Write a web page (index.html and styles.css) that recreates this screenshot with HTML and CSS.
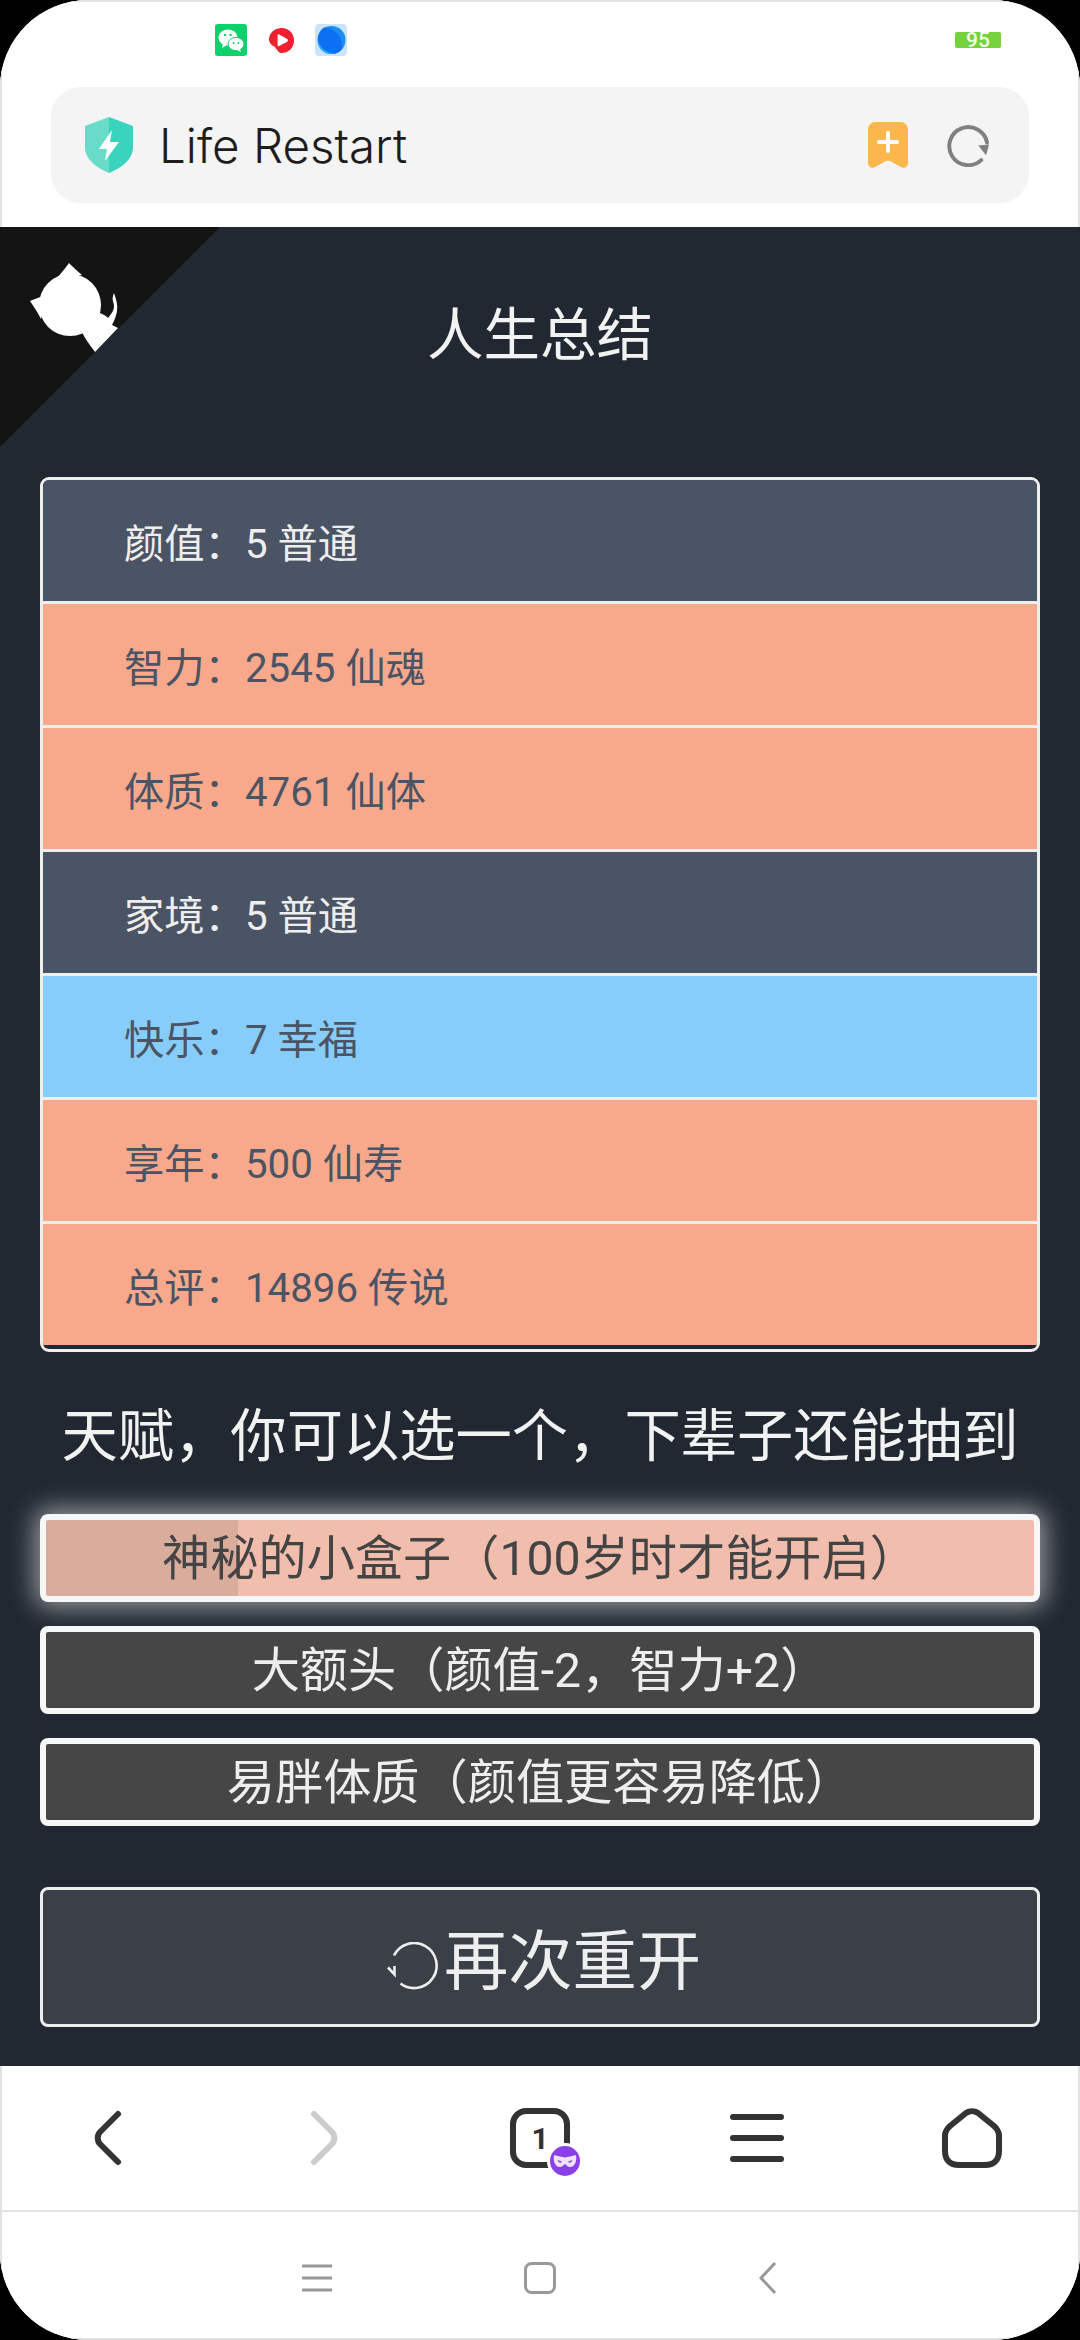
FILE: index.html
```html
<!DOCTYPE html>
<html lang="zh">
<head>
<meta charset="utf-8">
<title>Life Restart</title>
<link rel="stylesheet" href="styles.css">
</head>
<body>
<div class="screen">
  <header class="browser-top">
    <div class="status">
      <svg class="st-icon" viewBox="0 0 32 32"><rect width="32" height="32" rx="3" fill="#0fd16b"/><ellipse cx="13" cy="13.5" rx="9.5" ry="8" fill="#fff"/><path d="M8 19l-1 5 5-3z" fill="#fff"/><ellipse cx="21" cy="20" rx="8" ry="6.6" fill="#fff" stroke="#0fd16b" stroke-width="1"/><path d="M25 25l1 3-4-2z" fill="#fff"/><circle cx="10" cy="11" r="1.2" fill="#0fd16b"/><circle cx="15.500" cy="11" r="1.2" fill="#0fd16b"/><circle cx="18.500" cy="19" r="1" fill="#0fd16b"/><circle cx="23.500" cy="19" r="1" fill="#0fd16b"/></svg>
      <svg class="st-icon st-red" viewBox="0 0 28 28"><path d="M14 1C22 1 27 7 27 14C27 22 21 27 14 27C10 27 9 22 6 20C2 18 1 15 1 12C2 5 8 1 14 1Z" fill="#f0202f"/><path d="M10 8.500C10 8 10.500 7.500 11 7.500L20 12.500C20.800 13.200 20.800 14.500 20 15.200L11 20C10.500 20 10 19.500 10 19Z" fill="#fff"/></svg>
      <svg class="st-icon" viewBox="0 0 32 32"><rect width="32" height="32" rx="4" fill="#c9e4fb"/><circle cx="16.500" cy="16" r="14" fill="#1d8df0"/><path d="M9 3.500C17 3.500 28 10 27 25C24 29 20 30 16.500 30C9 30 3 24 3 16C3 11 5 6 9 3.500Z" fill="#0d6ff3"/><path d="M3 16C5 24 11 29 19 29.500L16.500 30C9 30 3 24 3 16Z" fill="#25b5ee"/></svg>
      <span class="battery">95</span>
    </div>
    <div class="address">
      <svg class="shield" viewBox="0 0 48 56"><path d="M24 0L48 9V30C48 43 36 51 24 56Z" fill="#3ad3bd"/><path d="M24 0L0 9V30C0 43 12 51 24 56Z" fill="#68dbc9"/><path d="M27 13L14 32H22L20 44L34 25H25Z" fill="#fff"/></svg>
      <span class="site">Life Restart</span>
      <svg class="bookmark" viewBox="0 0 40 46"><path d="M8 0H32C37 0 40 3 40 8V41C40 45 36 47 33 45L22 39C21 38.500 19 38.500 18 39L7 45C4 47 0 45 0 41V8C0 3 3 0 8 0Z" fill="#fbb64c"/><path d="M20 11V29M11 20H29" stroke="#fff" stroke-width="4" stroke-linecap="round"/></svg>
      <svg class="reload" viewBox="0 0 44 44"><path d="M35 37A19.500 19.500 0 1 1 41 19" fill="none" stroke="#808080" stroke-width="4" stroke-linecap="round"/><path d="M32 22L43 21L40 32Z" fill="#808080"/></svg>
    </div>
  </header>

  <main class="game">
    <svg class="corner" viewBox="0 0 220 220">
      <path d="M0 0H220L0 220Z" fill="#141414"/>
      <g fill="#fff">
        <circle cx="70" cy="78" r="31"/>
        <path d="M69 36C72 39 76 43 82 48L56 53C59 48 65 42 69 36Z"/>
        <path d="M30 74C35 72 40 70 46 68L41 92C38 86 34 80 30 74Z"/>
        <path d="M81 102L96 84L104 88C106 89 107 90 108 91C112 86 114 83 114 79C114 75 111 73 114 66C116 72 118 78 117 84C116 90 114 94 112 98L118 101L95 125C90 118 84 111 81 102Z"/>
      </g>
    </svg>
    <h1 class="title">人生总结</h1>
    <ul class="summary">
      <li class="row row-grey">颜值：5 普通</li>
      <li class="row row-orange">智力：2545 仙魂</li>
      <li class="row row-orange">体质：4761 仙体</li>
      <li class="row row-grey">家境：5 普通</li>
      <li class="row row-blue">快乐：7 幸福</li>
      <li class="row row-orange">享年：500 仙寿</li>
      <li class="row row-orange row-last">总评：14896 传说</li>
    </ul>
    <h2 class="subtitle">天赋，你可以选一个，下辈子还能抽到</h2>
    <div class="talents">
      <button class="talent talent-active">神秘的小盒子（100岁时才能开启）</button>
      <button class="talent">大额头（颜值-2，智力+2）</button>
      <button class="talent">易胖体质（颜值更容易降低）</button>
    </div>
    <button class="restart">
      <svg class="restart-icon" viewBox="0 0 54 50"><path d="M7 13.500A22.500 22.500 0 1 1 13.500 41.500" fill="none" stroke="#eee" stroke-width="2.600"/><path d="M1 25.500L7.500 32.500L7.500 24" fill="none" stroke="#eee" stroke-width="2.600"/></svg>
      <span>再次重开</span>
    </button>
  </main>

  <nav class="toolbar">
    <div class="tool"><svg class="tool-icon" viewBox="0 0 60 60"><path d="M40 6L22 24C19 27 19 33 22 36L40 54" fill="none" stroke="#333" stroke-width="6" stroke-linecap="round"/></svg></div>
    <div class="tool"><svg class="tool-icon" viewBox="0 0 60 60"><path d="M20 6L38 24C41 27 41 33 38 36L20 54" fill="none" stroke="#ccc" stroke-width="6" stroke-linecap="round"/></svg></div>
    <div class="tool">
      <div class="tabs">
        <svg class="tool-icon" viewBox="0 0 60 60"><rect x="3" y="3" width="54" height="54" rx="13" fill="none" stroke="#333" stroke-width="6"/></svg>
        <span class="tab-count">1</span>
        <svg class="mask" viewBox="0 0 36 36"><circle cx="18" cy="18" r="18" fill="#fff"/><circle cx="18" cy="18" r="15" fill="#8b3fe8"/><path d="M7 12C11 13 15 14 18 14.500C21 14 25 13 29 12C30 18 28 24 23 24C20 24 19 21 18 21C17 21 16 24 13 24C8 24 6 18 7 12Z" fill="#efe3fc"/><path d="M10.500 17L15 18.500C14 20.500 11.500 20 10.500 17ZM25.500 17L21 18.500C22 20.500 24.500 20 25.500 17Z" fill="#8b3fe8"/></svg>
      </div>
    </div>
    <div class="tool"><svg class="tool-icon" viewBox="0 0 60 60"><path d="M7 9H55M7 30H55M7 51H55" stroke="#333" stroke-width="6" stroke-linecap="round"/></svg></div>
    <div class="tool"><svg class="tool-icon" viewBox="0 0 60 60"><path d="M24 5C27.500 2.500 32.500 2.500 36 5L52 18C55.500 21 57 24 57 28V43C57 52 52 57 43 57H17C8 57 3 52 3 43V28C3 24 4.500 21 8 18Z" fill="none" stroke="#333" stroke-width="6" stroke-linejoin="round"/></svg></div>
  </nav>

  <nav class="sysnav">
    <svg class="sys sys-menu" viewBox="0 0 30 30"><path d="M1 3H29M1 15H29M1 27H29" stroke="#999" stroke-width="3" stroke-linecap="round"/></svg>
    <svg class="sys sys-home" viewBox="0 0 32 32"><rect x="1.500" y="1.500" width="29" height="29" rx="6" fill="none" stroke="#999" stroke-width="3"/></svg>
    <svg class="sys sys-back" viewBox="0 0 18 32"><path d="M16 1L2 16L16 31" fill="none" stroke="#999" stroke-width="3"/></svg>
  </nav>
</div>
</body>
</html>
```
FILE: styles.css
```css
* { box-sizing: border-box; }
html, body { margin: 0; padding: 0; background: #000; }
body { width: 1080px; height: 2340px; font-family: Roboto, "Noto Sans CJK SC", sans-serif; }

.screen {
  position: relative;
  width: 1080px;
  height: 2340px;
  display: flex;
  flex-direction: column;
  overflow: hidden;
  border-radius: 88px;
  background: #fff;
}

.browser-top { height: 227px; flex: none; background: #fff; box-shadow: inset 2px 2px 0 #e2e2e2, inset -2px 0 0 #e2e2e2; }
.status { height: 87px; display: flex; align-items: center; padding: 0 79px 7px 215px; }
.st-icon { width: 32px; height: 32px; flex: none; margin-right: 21px; }
.st-red { width: 27px; height: 27px; margin-right: 20px; }
.battery {
  margin-left: auto;
  width: 46px;
  height: 16px;
  background: #74d23c;
  border-radius: 2px;
  color: #f4fbe9;
  font-size: 21px;
  font-weight: 500;
  line-height: 16px;
  text-align: center;
}

.address {
  height: 116px;
  margin: 0 51px;
  padding: 0 39px 0 34px;
  display: flex;
  align-items: center;
  background: #f4f4f4;
  border-radius: 30px;
}
.shield { width: 48px; height: 56px; flex: none; margin-right: 26px; }
.site { font-family: Inter, sans-serif; font-size: 47.500px; font-weight: 350; color: #1d1d1d; flex: 1; }
.bookmark { width: 40px; height: 46px; flex: none; margin-right: 39px; }
.reload { width: 43px; height: 43px; flex: none; }

.game {
  position: relative;
  height: 1839px;
  flex: none;
  padding: 0 40px;
  background: #212832;
  color: #eee;
}
.corner { position: absolute; left: 0; top: 0; width: 220px; height: 220px; }
.title { margin: 0; padding: 79px 0 111px; font-size: 56.500px; font-weight: 400; line-height: 60px; text-align: center; color: #f2f2f2; }

.summary { margin: 0; padding: 0 0 1px; list-style: none; border: 3px solid #eee; border-radius: 9px; overflow: hidden; }
.row { height: 124px; padding: 8px 0 0 81px; border-bottom: 3px solid #eee; font-size: 40.300px; line-height: 113px; }
.row-last { border-bottom-color: #212832; }
.row-grey { background: #4b5464; color: #eee; }
.row-orange { background: #f9a98b; color: #4b5464; }
.row-blue { background: #87cdfa; color: #4b5464; }

.subtitle { margin: 55px 0 47px; font-size: 56.300px; font-weight: 400; line-height: 60px; text-align: center; color: #f2f2f2; white-space: nowrap; }

.talents { display: flex; flex-direction: column; gap: 24px; }
.talent {
  height: 88px;
  padding: 2px 0 0;
  border: 6px solid #f7f7f7;
  border-radius: 8px;
  background: #464646;
  color: #eee;
  font: 400 48.200px/1 Roboto, "Noto Sans CJK SC", sans-serif;
  text-align: center;
}
.talent-active {
  background: linear-gradient(to right, #d9ac9c 19.4%, #f1bdac 19.4%);
  color: #444;
  box-shadow: 0 0 26px 5px rgba(255, 255, 255, 0.55);
}

.restart {
  width: 100%;
  height: 140px;
  margin-top: 61px;
  padding: 10px 0 0 8px;
  display: flex;
  align-items: center;
  justify-content: center;
  gap: 3px;
  border: 3px solid #eee;
  border-radius: 8px;
  background: #3b3f48;
  color: #eee;
  font: 400 64.300px/1 Roboto, "Noto Sans CJK SC", sans-serif;
}
.restart-icon { width: 54px; height: 50px; flex: none; margin-top: 10px; }

.toolbar { height: 146px; flex: none; display: flex; align-items: center; background: #fff; border-bottom: 2px solid #e3e3e3; box-shadow: inset 2px 0 0 #e2e2e2, inset -2px 0 0 #e2e2e2; }
.tool { flex: 1; display: flex; justify-content: center; }
.tool-icon { width: 60px; height: 60px; display: block; }
.tabs { position: relative; width: 60px; height: 60px; }
.tab-count { position: absolute; inset: 0; display: flex; align-items: center; justify-content: center; font-size: 30px; font-weight: 700; color: #333; }
.mask { position: absolute; left: 37px; top: 35px; width: 36px; height: 36px; }

.sysnav { height: 128px; flex: none; display: flex; align-items: center; padding: 4px 0 0 302px; background: #fff; box-shadow: inset 2px -2px 0 #e2e2e2, inset -2px 0 0 #e2e2e2; }
.sys { flex: none; display: block; }
.sys-menu { width: 30px; height: 30px; margin-right: 192px; }
.sys-home { width: 32px; height: 32px; margin-right: 203px; }
.sys-back { width: 18px; height: 32px; }
```
